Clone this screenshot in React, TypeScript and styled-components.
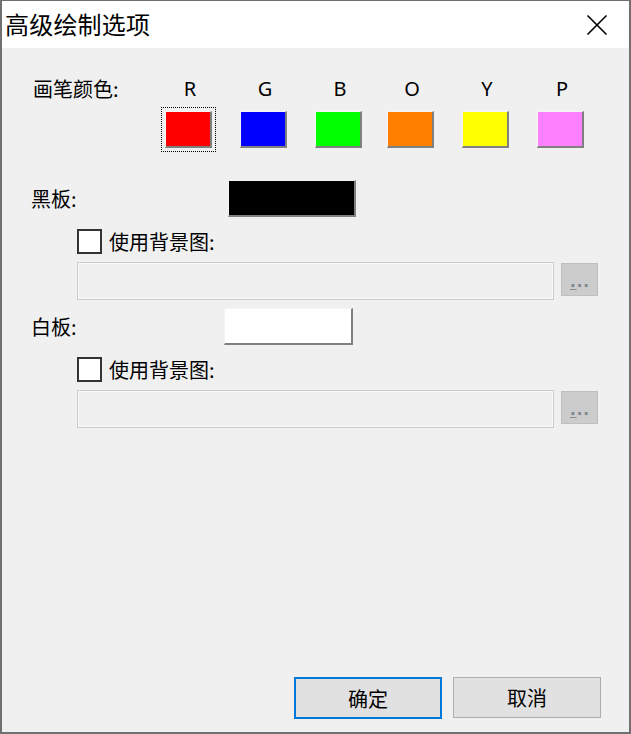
import React from 'react';
import styled, { createGlobalStyle } from 'styled-components';

const GlobalStyle = createGlobalStyle`
  html, body {
    margin: 0;
    padding: 0;
    background: #707070;
  }
  body {
    font-family: "Noto Sans CJK SC", "Noto Sans", sans-serif;
    color: #000;
  }
`;

interface PenColor {
  key: string;
  color: string;
  offset: number;
}

const penColors: PenColor[] = [
  { key: 'R', color: '#ff0000', offset: 0 },
  { key: 'G', color: '#0000ff', offset: 28 },
  { key: 'B', color: '#00ff00', offset: 28 },
  { key: 'O', color: '#ff8000', offset: 25 },
  { key: 'Y', color: '#ffff00', offset: 28 },
  { key: 'P', color: '#ff80ff', offset: 28 },
];

const CloseIcon: React.FC = () => (
  <svg width="22" height="22" viewBox="0 0 22 22">
    <path d="M1.5 1.5 L20.5 20.5 M20.5 1.5 L1.5 20.5" stroke="#000" strokeWidth="1.6" fill="none" />
  </svg>
);

interface BoardProps {
  label: string;
  color: string;
  labelWidth: number;
  width: number;
  top: number;
}

const BoardSection: React.FC<BoardProps> = ({ label, color, labelWidth, width, top }: BoardProps) => (
  <>
    <BoardRow top={top}>
      <BoardLabel width={labelWidth}>{label}:</BoardLabel>
      <ColorSwatch color={color} w={width} h={37} />
    </BoardRow>
    <CheckRow>
      <CheckBox />
      <CheckLabel>使用背景图:</CheckLabel>
    </CheckRow>
    <PathRow>
      <PathInput disabled />
      <BrowseButton disabled>
        <u>.</u>..
      </BrowseButton>
    </PathRow>
  </>
);

const App: React.FC = () => {
  return (
    <>
      <GlobalStyle />
      <Window>
        <TitleBar>
          <Title>高级绘制选项</Title>
          <CloseButton>
            <CloseIcon />
          </CloseButton>
        </TitleBar>

        <Body>
          <PenRow>
            <PenLabel>画笔颜色:</PenLabel>
            {penColors.map((pen: PenColor, i: number) => (
              <PenColumn key={pen.key} offset={pen.offset}>
                <PenLetter>{pen.key}</PenLetter>
                <ColorSwatch color={pen.color} w={47} h={37} focused={i === 0} />
              </PenColumn>
            ))}
          </PenRow>

          <BoardSection label="黑板" color="#000000" labelWidth={197} width={128} top={32} />
          <BoardSection label="白板" color="#ffffff" labelWidth={193} width={129} top={8} />

          <Footer>
            <DialogButton primary>确定</DialogButton>
            <DialogButton>取消</DialogButton>
          </Footer>
        </Body>
      </Window>
    </>
  );
};

export default App;

const Window = styled.div`
  box-sizing: border-box;
  width: 631px;
  height: 734px;
  border: 2px solid #707070;
  border-top-width: 1px;
  display: flex;
  flex-direction: column;
  background: #f0f0f0;
`;

const TitleBar = styled.div`
  height: 47px;
  background: #ffffff;
  display: flex;
  align-items: center;
  justify-content: space-between;
  padding: 0 21px 0 3px;
`;

const Title = styled.div`
  font-size: 24px;
  line-height: 30px;
  letter-spacing: 0.2px;
  margin-top: -1px;
`;

const CloseButton = styled.div`
  width: 22px;
  height: 22px;
  display: flex;
  margin-top: 1px;
`;

const Body = styled.div`
  flex: 1;
  display: flex;
  flex-direction: column;
  padding: 29px 28px 13px 29px;
  font-size: 20px;
`;

const PenRow = styled.div`
  display: flex;
  align-items: flex-start;
`;

const PenLabel = styled.div`
  width: 132px;
  padding-left: 2px;
  line-height: 24px;
`;

const PenColumn = styled.div<{ offset: number }>`
  display: flex;
  flex-direction: column;
  align-items: center;
  margin-left: ${({ offset }) => offset}px;
`;

const PenLetter = styled.div`
  font-family: "Noto Sans", "Open Sans", sans-serif;
  font-size: 20px;
  line-height: 24px;
  height: 24px;
  padding-left: 3px;
  margin-bottom: 10px;
`;

const ColorSwatch = styled.div<{ color: string; w: number; h: number; focused?: boolean }>`
  box-sizing: border-box;
  width: ${({ w }) => w}px;
  height: ${({ h }) => h}px;
  background: ${({ color }) => color};
  border-style: solid;
  border-width: 1px 2px 2px 1px;
  border-color: #f4f4f4 #808080 #808080 #f4f4f4;
  outline: ${({ focused }) => (focused ? '1px dotted #000' : 'none')};
  outline-offset: 3px;
`;

const BoardRow = styled.div<{ top: number }>`
  display: flex;
  align-items: center;
  margin-top: ${({ top }) => top}px;
`;

const BoardLabel = styled.div<{ width: number }>`
  width: ${({ width }) => width}px;
  line-height: 24px;
`;

const CheckRow = styled.div`
  display: flex;
  align-items: center;
  gap: 7px;
  margin-top: 12px;
  padding-left: 46px;
`;

const CheckBox = styled.div`
  box-sizing: border-box;
  width: 25px;
  height: 25px;
  border: 2px solid #333333;
  background: #ffffff;
`;

const CheckLabel = styled.div`
  line-height: 25px;
`;

const PathRow = styled.div`
  display: flex;
  align-items: flex-start;
  gap: 7px;
  margin-top: 8px;
  padding-left: 46px;
`;

const PathInput = styled.input`
  box-sizing: border-box;
  width: 477px;
  height: 38px;
  margin: 0;
  border: 1px solid #cccccc;
  box-shadow: inset 0 0 0 1px #f8f8f8;
  background: #f0f0f0;
  outline: none;
`;

const BrowseButton = styled.button`
  box-sizing: border-box;
  width: 37px;
  height: 33px;
  margin: 1px 0 0;
  padding: 4px 0 0 1px;
  border: 1px solid #bfbfbf;
  background: #cccccc;
  color: #7d8790;
  font-family: "DejaVu Sans", sans-serif;
  font-weight: bold;
  font-size: 15px;
  letter-spacing: 1px;
  text-align: center;

  u {
    text-decoration-color: #8a8a8a;
    text-underline-offset: 2px;
  }
`;

const Footer = styled.div`
  margin-top: auto;
  display: flex;
  justify-content: flex-end;
  align-items: flex-start;
  gap: 11px;
`;

const DialogButton = styled.button<{ primary?: boolean }>`
  box-sizing: border-box;
  width: 148px;
  height: ${({ primary }) => (primary ? 42 : 41)}px;
  margin: 0;
  padding: 0;
  background: #e1e1e1;
  border: ${({ primary }) => (primary ? '2px solid #0078d7' : '1px solid #adadad')};
  font-family: "Noto Sans CJK SC", sans-serif;
  font-size: 20px;
  color: #000;
`;
